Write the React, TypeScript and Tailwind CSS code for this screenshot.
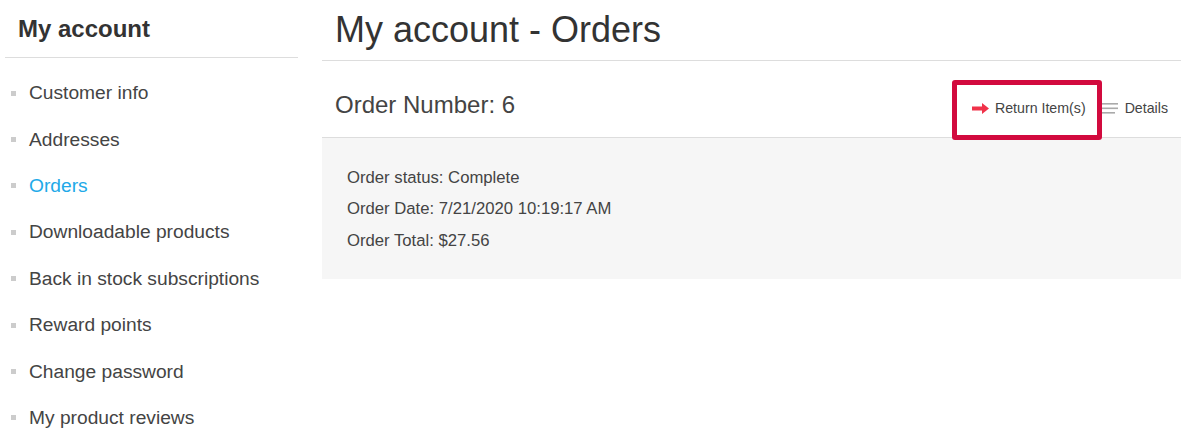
const navItems = [
  "Customer info",
  "Addresses",
  "Orders",
  "Downloadable products",
  "Back in stock subscriptions",
  "Reward points",
  "Change password",
  "My product reviews",
];

function Sidebar() {
  return (
    <aside className="ml-[5px] w-[293px] shrink-0">
      <div className="border-b border-[#dddddd] pt-[14px] pb-[13px] pl-[13px] text-[24px] leading-[30px] font-bold text-[#333333]">
        My account
      </div>
      <ul className="mt-[12px]">
        {navItems.map((item) => (
          <li key={item} className="flex h-[46.4px] items-center">
            <span className="ml-[6px] h-[5px] w-[5px] bg-[#cccccc]" />
            <span
              className={
                "ml-[13px] text-[19.2px] leading-[22px] " +
                (item === "Orders" ? "text-[#21a9e8]" : "text-[#444444]")
              }
            >
              {item}
            </span>
          </li>
        ))}
      </ul>
    </aside>
  );
}

function ArrowIcon() {
  return (
    <svg width="17" height="11" viewBox="0 0 17 11" className="shrink-0">
      <path d="M0 3.5h10V0l7 5.5-7 5.5V7.5H0z" fill="#f0324a" />
    </svg>
  );
}

function LinesIcon() {
  return (
    <svg width="16" height="11" viewBox="0 0 16 11" className="shrink-0">
      <rect x="0" y="0" width="16" height="1.6" fill="#aaaaaa" />
      <rect x="0" y="4.5" width="16" height="1.6" fill="#aaaaaa" />
      <rect x="0" y="9" width="13" height="1.6" fill="#aaaaaa" />
    </svg>
  );
}

function OrderCard() {
  return (
    <div>
      <div className="flex items-center justify-between border-b border-[#dddddd] pt-[30px] pr-[13px] pb-[18px] pl-[13px]">
        <h2 className="text-[24px] leading-[28px] text-[#444444]">Order Number: 6</h2>
        <div className="mt-[6px] flex items-center text-[14.2px] leading-[18px] text-[#444444]">
          <a className="relative flex items-center gap-[6px]">
            <span className="absolute top-[-19px] right-[-16px] bottom-[-23px] left-[-20px] rounded-[3px] border-[5px] border-[#d20a3e]" />
            <ArrowIcon />
            <span>Return Item(s)</span>
          </a>
          <a className="ml-[16px] flex items-center gap-[7px]">
            <LinesIcon />
            <span>Details</span>
          </a>
        </div>
      </div>
      <div className="bg-[#f6f6f6] pt-[23.5px] pb-[22.5px] pl-[25px] text-[16.7px] leading-[31.5px] text-[#444444]">
        <div>Order status: Complete</div>
        <div>Order Date: 7/21/2020 10:19:17 AM</div>
        <div>Order Total: $27.56</div>
      </div>
    </div>
  );
}

export default function App() {
  return (
    <div className="flex h-[446px] w-[1200px] bg-white font-['Liberation_Sans',Arial,sans-serif]">
      <Sidebar />
      <main className="ml-[24px] w-[859px]">
        <h1 className="border-b border-[#dddddd] pt-[10px] pb-[10px] pl-[13px] text-[36px] leading-[40px] text-[#333333]">
          My account - Orders
        </h1>
        <OrderCard />
      </main>
    </div>
  );
}
